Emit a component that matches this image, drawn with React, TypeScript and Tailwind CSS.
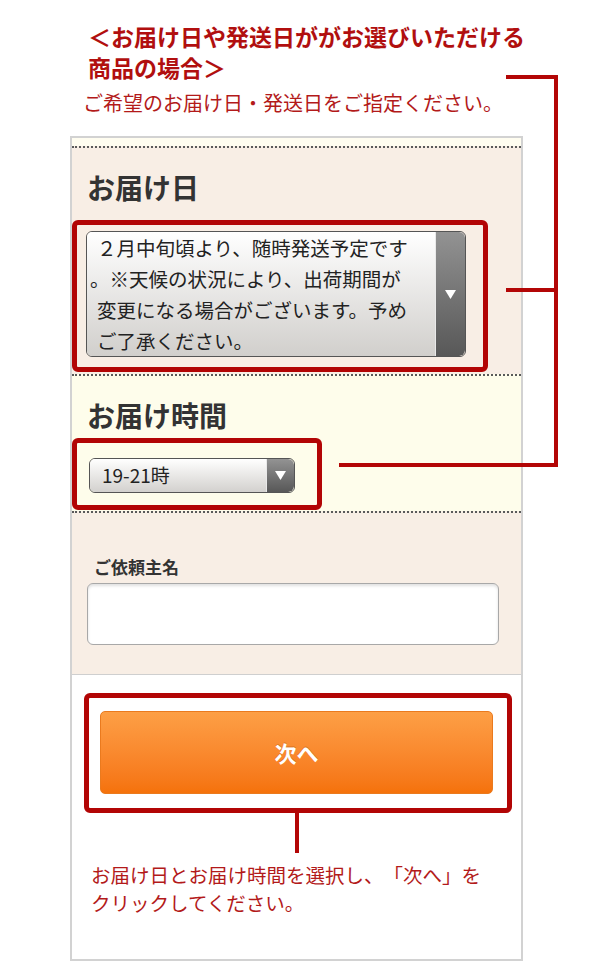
import React from "react";

const RED = "#b30606";

function SelectArrow({ className }: { className: string }) {
  return (
    <div className={`flex items-center justify-center rounded-r-[6px] border-l border-[#e9e9e9] bg-gradient-to-b from-[#939393] to-[#585858] ${className}`}>
      <svg width="11" height="9" viewBox="0 0 11 9">
        <polygon points="0,0 11,0 5.5,9" fill="#ffffff" />
      </svg>
    </div>
  );
}

export default function App() {
  return (
    <div className="relative w-[600px] h-[976px] bg-white overflow-hidden font-['Noto_Sans_CJK_JP','Noto_Sans',sans-serif] [text-spacing-trim:space-all]">
      {/* 見出し */}
      <div className="pl-[88px] pt-[21px] text-[23px] leading-[31px] font-bold text-[#b10f0f]">
        <p>＜お届け日や発送日ががお選びいただける</p>
        <p>商品の場合＞</p>
      </div>
      <p className="mt-[6px] pl-[83px] text-[20px] leading-[28px] text-[#b31a1a]">
        ご希望のお届け日・発送日をご指定ください。
      </p>

      {/* カード */}
      <div className="mt-[19px] ml-[70px] w-[453px] border-2 border-[#d2d2d2] bg-white">
        <div className="h-[8px] bg-[#fffdf0]" />

        {/* お届け日 */}
        <div className="border-t-2 border-dotted border-[#5a5a5a] bg-[#f8eee5] pt-[22px] pb-[2px]">
          <h2 className="pl-[15px] text-[28px] leading-[34px] font-bold text-[#333]">お届け日</h2>
          <div className="mt-[16px] w-[416px] rounded-[6px] border-[5px] border-[#b20505] pl-[9px] pr-[17px] pt-[6px] pb-[10px]">
            <div className="flex h-[126px] w-[380px] rounded-[6px] border border-[#555] overflow-hidden">
              <div className="flex flex-1 items-center bg-gradient-to-b from-[#ffffff] to-[#d1cfcc] pl-[10px] text-[19.5px] leading-[31px] text-[#222]">
                <div>
                  <p>２月中旬頃より、随時発送予定です</p>
                  <p className="-ml-[7px]">。※天候の状況により、出荷期間が</p>
                  <p>変更になる場合がございます。予め</p>
                  <p>ご了承ください。</p>
                </div>
              </div>
              <SelectArrow className="w-[30px]" />
            </div>
          </div>
        </div>

        {/* お届け時間 */}
        <div className="border-t-2 border-dotted border-[#5a5a5a] bg-[#fefdeb] pt-[22px] pb-[1px]">
          <h2 className="pl-[15px] text-[28px] leading-[34px] font-bold text-[#333]">お届け時間</h2>
          <div className="mt-[6px] w-[250px] rounded-[6px] border-[5px] border-[#b20505] pl-[12px] pr-[22px] pt-[15px] pb-[12px]">
            <div className="flex h-[35px] w-[206px] rounded-[6px] border border-[#555] overflow-hidden">
              <div className="flex flex-1 items-center bg-gradient-to-b from-[#ffffff] to-[#d3d1ce] pl-[12px] text-[19px] text-[#222]">
                19-21時
              </div>
              <SelectArrow className="w-[28px]" />
            </div>
          </div>
        </div>

        {/* ご依頼主名 */}
        <div className="border-t-2 border-dotted border-[#5a5a5a] bg-[#f8eee5] pt-[42px] pb-[29px] pl-[15px] pr-[22px]">
          <label className="block pl-[7px] text-[17px] leading-[24px] font-bold text-[#333]">ご依頼主名</label>
          <div className="mt-[4px] h-[62px] rounded-[6px] border border-[#a8a8a8] bg-white shadow-[inset_0_2px_3px_rgba(0,0,0,0.12)]" />
        </div>

        {/* 次へ */}
        <div className="border-t border-[#cfcfcf] bg-white pt-[18px] pb-[42px]">
          <div className="ml-[12px] w-[428px] rounded-[6px] border-[5px] border-[#b20505] pl-[11px] pr-[14px] pt-[13px] pb-[14px]">
            <button className="flex h-[83px] w-[393px] items-center justify-center rounded-[5px] border border-[#ea7a1e] bg-gradient-to-b from-[#fd9f45] to-[#f5720a] text-[22px] font-bold text-white [text-shadow:0_-1px_0_rgba(160,70,0,0.4)]">
              次へ
            </button>
          </div>
          <div className="ml-[223px] h-[40px] w-[4px] bg-[#b30606]" />
          <div className="mt-[8px] pl-[19px] text-[19.5px] leading-[28px] text-[#b31a1a]">
            <p>お届け日とお届け時間を選択し、「次へ」を</p>
            <p>クリックしてください。</p>
          </div>
        </div>
      </div>

      {/* 注釈の線 */}
      <div className="absolute left-[506px] top-[75px] h-[4px] w-[52px]" style={{ background: RED }} />
      <div className="absolute left-[554px] top-[75px] h-[392px] w-[4px]" style={{ background: RED }} />
      <div className="absolute left-[506px] top-[288px] h-[4px] w-[48px]" style={{ background: RED }} />
      <div className="absolute left-[339px] top-[463px] h-[4px] w-[219px]" style={{ background: RED }} />
    </div>
  );
}
